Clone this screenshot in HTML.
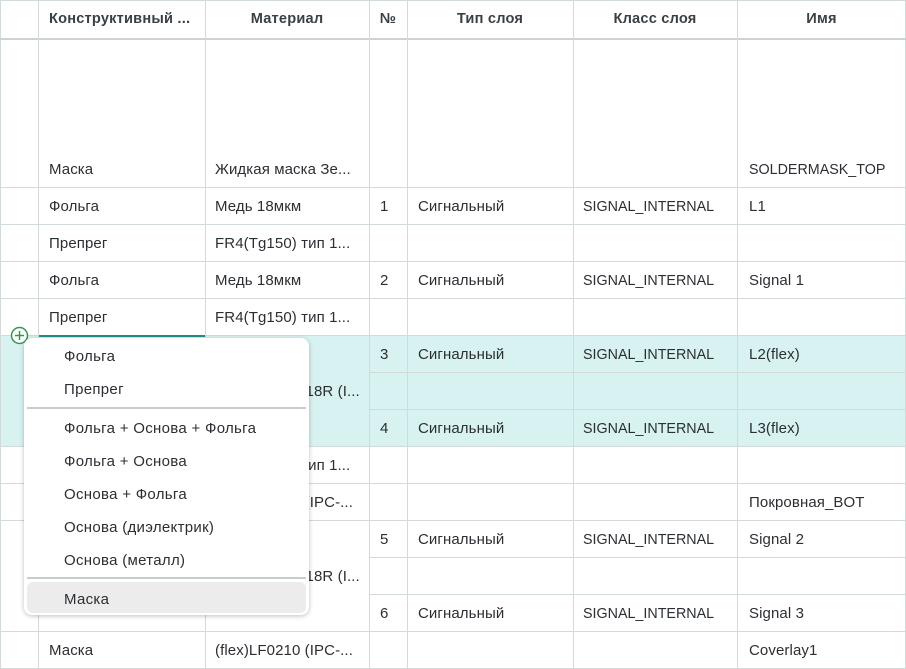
<!DOCTYPE html>
<html><head><meta charset="utf-8"><style>
body{margin:0;width:906px;height:669px;overflow:hidden;background:#fff;font-family:"Liberation Sans",sans-serif;font-size:15px;color:#2b2f33;position:relative}
.h{position:absolute;height:1px;background:#d3dada}
.v{position:absolute;width:1px;background:#d3dada;top:0;height:669px}
.t{position:absolute;white-space:nowrap;line-height:16px;letter-spacing:0.1px;margin-top:1px}
.u{font-size:14.3px;letter-spacing:0;margin-top:1px}
.hd{position:absolute;top:11px;font-weight:bold;font-size:14.6px;color:#3a3f44;text-align:center;line-height:16px;letter-spacing:0.2px}
.menu{position:absolute;left:24px;top:338px;width:285px;height:277px;background:#fff;border-radius:8px;box-shadow:0 1px 5px rgba(0,0,0,.25)}
.mi{position:absolute;left:40px;line-height:16px;color:#2b2f33;letter-spacing:0.3px;margin-top:1px}
.sep{position:absolute;left:3px;width:279px;height:2px;background:#c6cdcd}
</style></head><body>
<div style="position:absolute;left:0;top:335px;width:906px;height:111px;background:#d7f2f1"></div>
<div style="position:absolute;left:0;top:0;width:904px;height:667px;border:1px solid #d3dada"></div>
<div class="h" style="left:0;top:38px;width:906px;height:2px;background:#cbd3d3"></div>
<div class="h" style="left:0;top:187px;width:906px"></div>
<div class="h" style="left:0;top:224px;width:906px"></div>
<div class="h" style="left:0;top:261px;width:906px"></div>
<div class="h" style="left:0;top:298px;width:906px"></div>
<div class="h" style="left:0;top:335px;width:906px"></div>
<div class="h" style="left:369px;top:372px;width:537px"></div>
<div class="h" style="left:369px;top:409px;width:537px"></div>
<div class="h" style="left:0;top:446px;width:906px"></div>
<div class="h" style="left:0;top:483px;width:906px"></div>
<div class="h" style="left:0;top:520px;width:906px"></div>
<div class="h" style="left:369px;top:557px;width:537px"></div>
<div class="h" style="left:369px;top:594px;width:537px"></div>
<div class="h" style="left:0;top:631px;width:906px"></div>
<div class="h" style="left:38px;top:335px;width:167px;height:2px;background:#1f8f86"></div>
<div class="v" style="left:38px"></div><div class="v" style="left:205px"></div><div class="v" style="left:369px"></div><div class="v" style="left:407px"></div><div class="v" style="left:573px"></div><div class="v" style="left:737px"></div>
<div class="hd" style="left:49px;text-align:left">Конструктивный ...</div>
<div class="hd" style="left:205px;width:164px">Материал</div>
<div class="hd" style="left:369px;width:38px">№</div>
<div class="hd" style="left:407px;width:166px">Тип слоя</div>
<div class="hd" style="left:573px;width:164px">Класс слоя</div>
<div class="hd" style="left:737px;width:169px">Имя</div>
<div class="t" style="left:49px;top:161px">Маска</div><div class="t" style="left:215px;top:161px">Жидкая маска Зе...</div><div class="t u" style="left:749px;top:161px">SOLDERMASK_TOP</div>
<div class="t" style="left:49px;top:198px">Фольга</div><div class="t" style="left:215px;top:198px">Медь 18мкм</div><div class="t" style="left:380px;top:198px">1</div><div class="t" style="left:418px;top:198px">Сигнальный</div><div class="t u" style="left:583px;top:198px">SIGNAL_INTERNAL</div><div class="t" style="left:749px;top:198px">L1</div>
<div class="t" style="left:49px;top:235px">Препрег</div><div class="t" style="left:215px;top:235px">FR4(Tg150) тип 1...</div>
<div class="t" style="left:49px;top:272px">Фольга</div><div class="t" style="left:215px;top:272px">Медь 18мкм</div><div class="t" style="left:380px;top:272px">2</div><div class="t" style="left:418px;top:272px">Сигнальный</div><div class="t u" style="left:583px;top:272px">SIGNAL_INTERNAL</div><div class="t" style="left:749px;top:272px">Signal 1</div>
<div class="t" style="left:49px;top:309px">Препрег</div><div class="t" style="left:215px;top:309px">FR4(Tg150) тип 1...</div>
<div class="t" style="left:215px;top:383px">Медь 18мкм 18R (I...</div>
<div class="t" style="left:380px;top:346px">3</div><div class="t" style="left:418px;top:346px">Сигнальный</div><div class="t u" style="left:583px;top:346px">SIGNAL_INTERNAL</div><div class="t" style="left:749px;top:346px">L2(flex)</div>
<div class="t" style="left:380px;top:420px">4</div><div class="t" style="left:418px;top:420px">Сигнальный</div><div class="t u" style="left:583px;top:420px">SIGNAL_INTERNAL</div><div class="t" style="left:749px;top:420px">L3(flex)</div>
<div class="t" style="left:215px;top:457px">FR4(Tg150) тип 1...</div>
<div class="t" style="left:215px;top:494px">(flex)LF0210 (IPC-...</div><div class="t" style="left:749px;top:494px">Покровная_BOT</div>
<div class="t" style="left:380px;top:531px">5</div><div class="t" style="left:418px;top:531px">Сигнальный</div><div class="t u" style="left:583px;top:531px">SIGNAL_INTERNAL</div><div class="t" style="left:749px;top:531px">Signal 2</div>
<div class="t" style="left:215px;top:568px">Медь 18мкм 18R (I...</div>
<div class="t" style="left:380px;top:605px">6</div><div class="t" style="left:418px;top:605px">Сигнальный</div><div class="t u" style="left:583px;top:605px">SIGNAL_INTERNAL</div><div class="t" style="left:749px;top:605px">Signal 3</div>
<div class="t" style="left:49px;top:642px">Маска</div><div class="t" style="left:215px;top:642px">(flex)LF0210 (IPC-...</div><div class="t" style="left:749px;top:642px">Coverlay1</div>
<svg style="position:absolute;left:10px;top:326px" width="19" height="19" viewBox="0 0 19 19"><circle cx="9.5" cy="9.5" r="8" fill="#fff" stroke="#2e9a4a" stroke-width="1.5"/><path d="M9.5 5v9M5 9.5h9" stroke="#2e9a4a" stroke-width="1.5"/></svg>
<div class="menu">
<div class="mi" style="top:10px">Фольга</div>
<div class="mi" style="top:43px">Препрег</div>
<div class="sep" style="top:69px"></div>
<div class="mi" style="top:82px">Фольга + Основа + Фольга</div>
<div class="mi" style="top:115px">Фольга + Основа</div>
<div class="mi" style="top:148px">Основа + Фольга</div>
<div class="mi" style="top:181px">Основа (диэлектрик)</div>
<div class="mi" style="top:214px">Основа (металл)</div>
<div class="sep" style="top:239px"></div>
<div style="position:absolute;left:3px;top:244px;width:279px;height:31px;background:#ebeceb;border-radius:6px"></div>
<div class="mi" style="top:253px">Маска</div>
</div>
</body></html>
